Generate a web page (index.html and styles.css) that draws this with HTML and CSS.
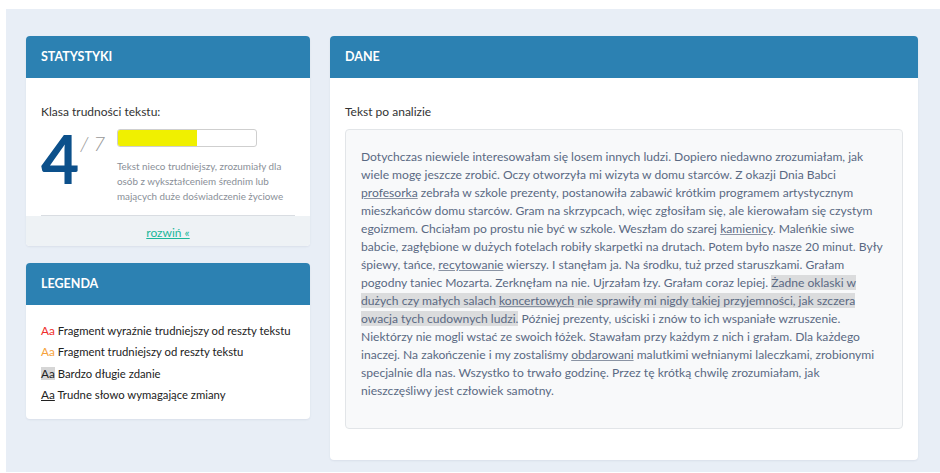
FILE: index.html
```html
<!DOCTYPE html>
<html lang="pl">
<head>
<meta charset="utf-8">
<title>Analiza tekstu</title>
<link rel="stylesheet" href="styles.css">
</head>
<body>
<div class="page">
  <aside class="side">
    <section class="card">
      <header class="card-head">Statystyki</header>
      <div class="card-body stats">
        <div class="label">Klasa trudności tekstu:</div>
        <div class="grade-row">
          <div class="grade"><span class="grade-num">4</span><span class="grade-max">/ 7</span></div>
          <div class="grade-info">
            <div class="bar"><div class="bar-fill" style="width:57.14%"></div></div>
            <p class="grade-desc">Tekst nieco trudniejszy, zrozumiały dla<br>osób z wykształceniem średnim lub<br>mających duże doświadczenie życiowe</p>
          </div>
        </div>
      </div>
      <div class="card-foot"><a href="#" class="more">rozwiń «</a></div>
    </section>

    <section class="card">
      <header class="card-head">Legenda</header>
      <ul class="card-body legend">
        <li><span class="aa red">Aa</span> Fragment wyraźnie trudniejszy od reszty tekstu</li>
        <li><span class="aa orange">Aa</span> Fragment trudniejszy od reszty tekstu</li>
        <li><span class="aa long">Aa</span> Bardzo długie zdanie</li>
        <li><span class="aa hard">Aa</span> Trudne słowo wymagające zmiany</li>
      </ul>
    </section>
  </aside>

  <main class="card main">
    <header class="card-head">Dane</header>
    <div class="card-body data">
      <div class="label">Tekst po analizie</div>
      <div class="textbox">
        <p>Dotychczas niewiele interesowałam się losem innych ludzi. Dopiero niedawno zrozumiałam, jak<br>
wiele mogę jeszcze zrobić. Oczy otworzyła mi wizyta w domu starców. Z okazji Dnia Babci<br>
<u class="w">profesorka</u> zebrała w szkole prezenty, postanowiła zabawić krótkim programem artystycznym<br>
mieszkańców domu starców. Gram na skrzypcach, więc zgłosiłam się, ale kierowałam się czystym<br>
egoizmem. Chciałam po prostu nie być w szkole. Weszłam do szarej <u class="w">kamienicy</u>. Maleńkie siwe<br>
babcie, zagłębione w dużych fotelach robiły skarpetki na drutach. Potem było nasze 20 minut. Były<br>
śpiewy, tańce, <u class="w">recytowanie</u> wierszy. I stanęłam ja. Na środku, tuż przed staruszkami. Grałam<br>
pogodny taniec Mozarta. Zerknęłam na nie. Ujrzałam łzy. Grałam coraz lepiej. <mark class="long-s">Żadne oklaski w<br>
dużych czy małych salach <u class="w">koncertowych</u> nie sprawiły mi nigdy takiej przyjemności, jak szczera<br>
owacja tych cudownych ludzi.</mark> Później prezenty, uściski i znów to ich wspaniałe wzruszenie.<br>
Niektórzy nie mogli wstać ze swoich łóżek. Stawałam przy każdym z nich i grałam. Dla każdego<br>
inaczej. Na zakończenie i my zostaliśmy <u class="w">obdarowani</u> malutkimi wełnianymi laleczkami, zrobionymi<br>
specjalnie dla nas. Wszystko to trwało godzinę. Przez tę krótką chwilę zrozumiałam, jak<br>
nieszczęśliwy jest człowiek samotny.</p>
      </div>
    </div>
  </main>
</div>
</body>
</html>
```

FILE: styles.css
```css
* { box-sizing: border-box; }

html, body {
  margin: 0;
  background: #fff;
}

body {
  font-family: Lato, "Open Sans", sans-serif;
  color: #333;
}

.page {
  margin: 9px 0 0 6px;
  height: 463px;
  background: #e8eef6;
  padding: 27px 22px 0 20px;
  display: flex;
  align-items: flex-start;
  gap: 20px;
}

.side {
  width: 284px;
  flex: none;
  display: flex;
  flex-direction: column;
  gap: 17px;
}

.card {
  background: #fff;
  border-radius: 4px;
  box-shadow: 0 1px 2px rgba(40, 60, 90, 0.08);
  overflow: hidden;
}

.card-head {
  height: 42px;
  background: #2c81b2;
  color: #fff;
  font-size: 12.5px;
  font-weight: 700;
  text-transform: uppercase;
  line-height: 42px;
  padding: 0 15px;
}

.card-body {
  margin: 0;
  padding: 0 15px;
}

.label {
  font-size: 12px;
  line-height: 16px;
  color: #333;
}

/* difficulty card */
.stats {
  padding-top: 26px;
}

.stats .label {
  margin-bottom: 9px;
}

.grade-row {
  display: flex;
  padding-bottom: 11px;
  border-bottom: 1px solid #d9dde2;
}

.grade {
  width: 76px;
  flex: none;
  display: flex;
  align-items: flex-start;
}

.grade-num {
  font-size: 66px;
  font-weight: 700;
  line-height: 1;
  color: #0c508b;
  margin-top: -3px;
  letter-spacing: -1px;
}

.grade-max {
  font-size: 20px;
  font-style: italic;
  font-weight: 300;
  line-height: 1;
  color: #999;
  margin: 4px 0 0 2px;
}

.bar {
  width: 140px;
  height: 18px;
  border: 1px solid #cfcfcf;
  border-radius: 3px;
  overflow: hidden;
  background: #fff;
}

.bar-fill {
  height: 100%;
  background: #f0f000;
}

.grade-desc {
  margin: 12px 0 0;
  font-size: 9.85px;
  line-height: 15px;
  color: #8a8f98;
  white-space: nowrap;
}

.card-foot {
  background: #eef2f5;
  height: 30px;
  text-align: center;
  line-height: 30px;
}

.more {
  font-size: 12px;
  color: #1cb79a;
  text-decoration: underline;
}

/* legend */
.legend {
  list-style: none;
  padding: 15px 15px 14px;
  font-size: 11.3px;
  line-height: 21.3px;
  color: #222;
  white-space: nowrap;
}

.aa {
  display: inline-block;
  line-height: 13px;
  font-size: 11.8px;
}

.aa.red { color: #ef2d2a; }
.aa.orange { color: #f6a23a; }
.aa.long { background: #d6d6d6; color: #222; }
.aa.hard { text-decoration: underline; color: #222; }

/* text panel */
.main {
  flex: 1;
}

.data {
  padding: 26px 15px 31px;
}

.data .label {
  margin-bottom: 9px;
}

.textbox {
  background: #f8f9fa;
  border: 1px solid #e2e5e8;
  border-radius: 4px;
  padding: 18px 15px 28px 15px;
}

.textbox p {
  margin: 0;
  font-size: 12.1px;
  line-height: 18px;
  color: #5a6983;
  white-space: nowrap;
}

.w {
  text-decoration: underline;
  text-decoration-color: #8b94a4;
}

.long-s {
  background: #dbdcdd;
  color: #5a6983;
}
```
